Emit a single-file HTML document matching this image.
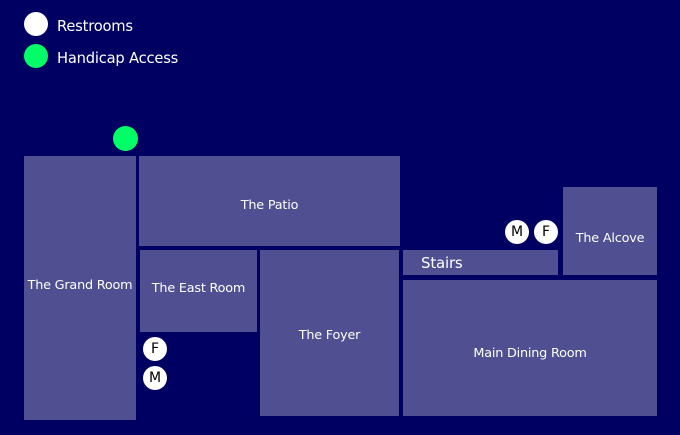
<!DOCTYPE html>
<html><head><style>
body{margin:0;width:680px;height:435px;background:#000062;overflow:hidden;position:relative;font-family:"DejaVu Sans","Liberation Sans",sans-serif;color:#fff}
.r{position:absolute;background:#4f4f92;font-size:12.8px;white-space:nowrap;letter-spacing:-0.2px}
.r span{position:absolute;left:0;right:0;text-align:center;line-height:16px}
.c{position:absolute;border-radius:50%;background:#fff;color:#000;font-size:14px;display:flex;align-items:center;justify-content:center}
.g{background:#00ff66}
.t{position:absolute;font-size:14.7px;letter-spacing:-0.2px}
</style></head><body>
<div class="c" style="left:24px;top:12px;width:24px;height:24px"></div>
<div class="t" style="left:57px;top:18px">Restrooms</div>
<div class="c g" style="left:24px;top:44px;width:24px;height:24px"></div>
<div class="t" style="left:57px;top:50px">Handicap Access</div>
<div class="c g" style="left:113px;top:126px;width:25px;height:25px"></div>

<div class="r" style="left:24px;top:156px;width:112px;height:264px"><span style="top:122px">The Grand Room</span></div>
<div class="r" style="left:139px;top:156px;width:261px;height:90px"><span style="top:42px">The Patio</span></div>
<div class="r" style="left:140px;top:250px;width:117px;height:82px"><span style="top:31px">The East Room</span></div>
<div class="r" style="left:260px;top:250px;width:139px;height:166px"><span style="top:78px">The Foyer</span></div>
<div class="r" style="left:403px;top:250px;width:155px;height:25px;font-size:15px"><span style="top:5px;text-align:left;left:18px">Stairs</span></div>
<div class="r" style="left:563px;top:187px;width:94px;height:88px"><span style="top:44px">The Alcove</span></div>
<div class="r" style="left:403px;top:280px;width:254px;height:136px"><span style="top:66px">Main Dining Room</span></div>

<div class="c" style="left:505px;top:220px;width:24px;height:24px">M</div>
<div class="c" style="left:534px;top:220px;width:24px;height:24px">F</div>
<div class="c" style="left:143px;top:337px;width:24px;height:24px">F</div>
<div class="c" style="left:143px;top:366px;width:24px;height:24px">M</div>
</body></html>
